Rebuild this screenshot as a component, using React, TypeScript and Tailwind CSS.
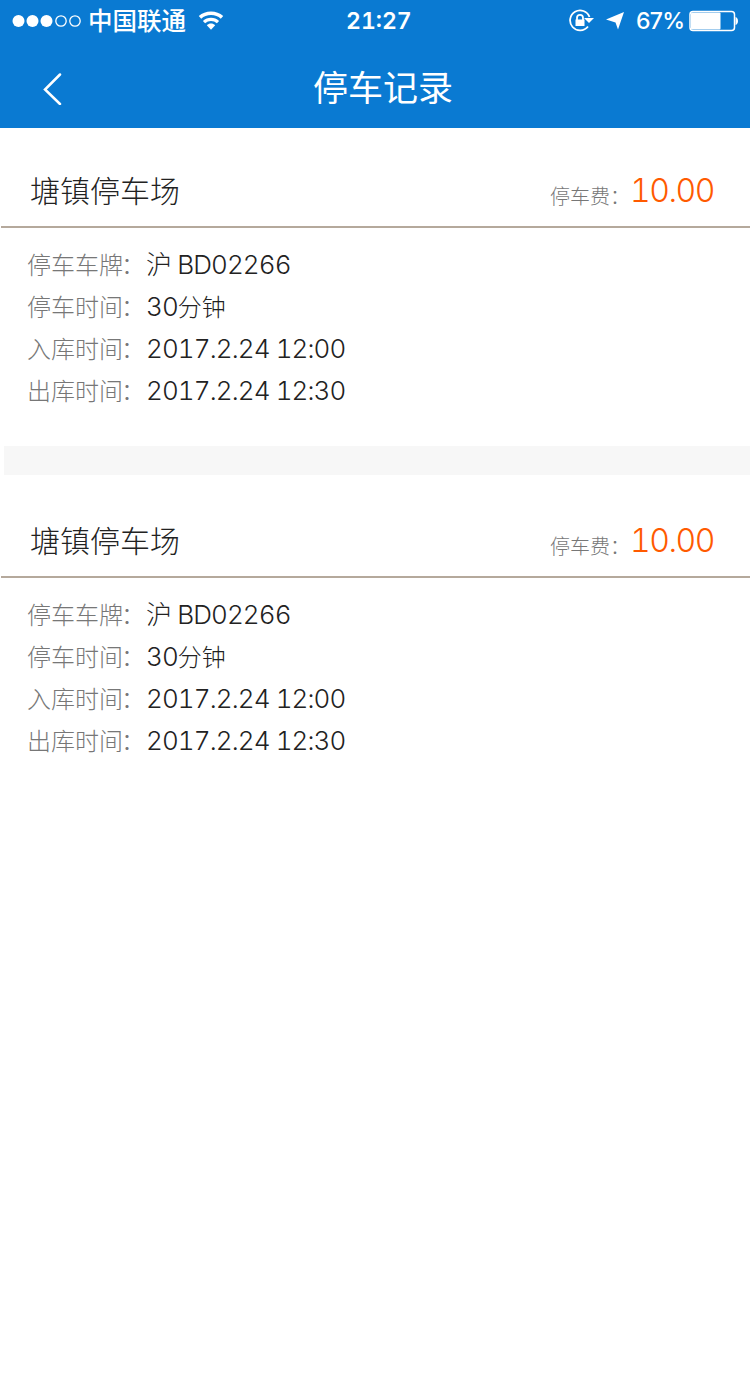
import { ReactNode } from "react";

const records = [
  {
    name: "塘镇停车场",
    fee: "10.00",
    plate: "沪 BD02266",
    duration: "30",
    entry: "2017.2.24 12:00",
    exit: "2017.2.24 12:30",
  },
  {
    name: "塘镇停车场",
    fee: "10.00",
    plate: "沪 BD02266",
    duration: "30",
    entry: "2017.2.24 12:00",
    exit: "2017.2.24 12:30",
  },
];

function StatusBar() {
  return (
    <div className="grid h-[42px] grid-cols-[346px_1fr_auto] items-center pl-3 pr-[11px] text-[23px] font-medium leading-none">
      <div className="flex items-center">
        <svg width="70" height="14" viewBox="0 0 70 14" fill="none" stroke="#fff">
          <circle cx="6.5" cy="7" r="6" fill="#fff" stroke="none" />
          <circle cx="20.5" cy="7" r="6" fill="#fff" stroke="none" />
          <circle cx="34.5" cy="7" r="6" fill="#fff" stroke="none" />
          <circle cx="49" cy="7" r="5.2" strokeWidth="1.3" />
          <circle cx="63" cy="7" r="5.2" strokeWidth="1.3" />
        </svg>
        <span className="ml-[6px] text-[24.5px]">中国联通</span>
        <svg className="ml-3" width="26" height="20" viewBox="0 0 26 20" fill="none" stroke="#fff">
          <path d="M2 6.3C8 0.8 18 0.8 24 6.3" strokeWidth="3.6" />
          <path d="M6 11.2C10 7.4 16 7.4 20 11.2" strokeWidth="3.2" />
          <path d="M8.8 14.2C11.3 12 14.7 12 17.2 14.2L13 18.8Z" fill="#fff" stroke="none" />
        </svg>
      </div>
      <span className="-ml-3 font-semibold tabular-nums">21:27</span>
      <div className="flex items-center">
        {/* Rotation lock */}
        <svg width="26" height="24" viewBox="0 0 26 24" fill="none" stroke="#fff" strokeWidth="1.8">
          <path d="M21.5 8A10 10 0 1 0 20 17.5" />
          <path d="M16 9h10l-5 5z" fill="#fff" stroke="none" />
          <path d="M9 11V8.8a3 3 0 0 1 6 0V11" />
          <rect x="7.5" y="10.5" width="9" height="6.5" fill="#fff" stroke="none" />
        </svg>
        <svg className="ml-3" width="18" height="18" viewBox="0 0 18 18" fill="#fff">
          <path d="M18 0L12 17.5L9.5 10.5L0 7.5Z" />
        </svg>
        <span className="ml-3 w-[47px] whitespace-nowrap tracking-[-0.7px]">67%</span>
        <svg className="ml-[6px]" width="50" height="22" viewBox="0 0 50 22" fill="none">
          <rect x="1" y="1.5" width="44.5" height="19" rx="3" stroke="#fff" strokeWidth="1.5" />
          <rect x="2" y="2.5" width="29.5" height="17" rx="1" fill="#fff" />
          <path d="M46.5 7c3.3.5 3.3 7.5 0 8z" fill="#fff" />
        </svg>
      </div>
    </div>
  );
}

function Row({ label, children }: { label: string; children: ReactNode }) {
  return (
    <div className="flex h-[42px] items-center whitespace-nowrap">
      <span className="w-[119px] pt-[2px] text-2xl text-[#777]">
        {label}
        <span className="-ml-[2px]">：</span>
      </span>
      <span className="pb-px tracking-[-0.9px] text-[#222] tabular-nums">{children}</span>
    </div>
  );
}

export default function App() {
  return (
    <div className="min-h-[1384px] w-[750px] bg-white font-['Inter','Noto_Sans_CJK_SC',sans-serif]">
      <header className="h-32 bg-[#0a7ad2] text-white">
        <StatusBar />
        <div className="grid h-[92px] grid-cols-[100px_1fr_84px] items-center">
          <svg className="ml-[42px] mt-[2px]" width="20" height="32" viewBox="0 0 20 32" fill="none">
            <path d="M18 1.5L3 16.5L18 31" stroke="#fff" strokeWidth="2.5" strokeLinecap="round" />
          </svg>
          <h1 className="text-center text-[35px] font-normal">停车记录</h1>
        </div>
      </header>

      {records.map((r, i) => (
        <div key={i}>
          {i > 0 && <div className="mb-[3px] ml-1 h-[29px] bg-[#f7f7f7]" />}
          <section className="h-[318px] font-light">
            <div className="ml-px flex h-[100px] items-end justify-between border-b-2 border-[#b5a99c] pb-[11px] pl-[29px] pr-[36px]">
              <h2 className="pb-px text-[30px] text-[#222]">{r.name}</h2>
              <div className="flex items-end">
                <span className="pb-[4px] text-xl text-[#777]">停车费：</span>
                <span className="text-[32px] leading-[48px] tracking-[-1.5px] text-[#ff5a00] tabular-nums">{r.fee}</span>
              </div>
            </div>
            <div className="pl-[27px] pt-4 text-[26px]">
              <Row label="停车车牌">{r.plate}</Row>
              <Row label="停车时间">
                {r.duration}
                <span className="text-2xl tracking-normal">分钟</span>
              </Row>
              <Row label="入库时间">{r.entry}</Row>
              <Row label="出库时间">{r.exit}</Row>
            </div>
          </section>
        </div>
      ))}
    </div>
  );
}
